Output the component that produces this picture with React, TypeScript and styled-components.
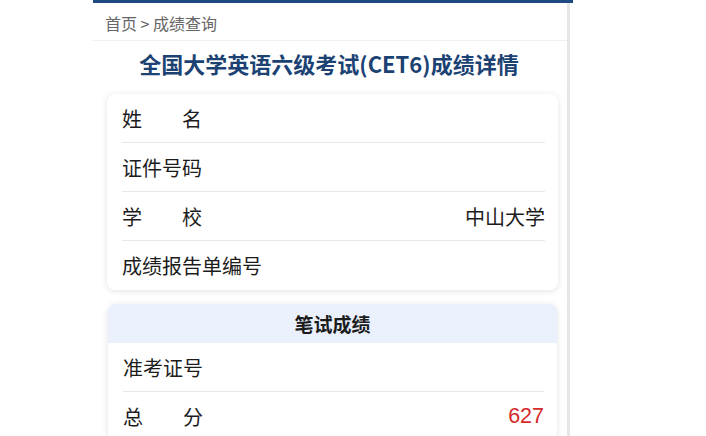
import styled, { createGlobalStyle } from "styled-components";

const GlobalStyle = createGlobalStyle`
  html, body {
    margin: 0;
    padding: 0;
    background: #fff;
  }
  body {
    font-family: "Noto Sans CJK SC", "Noto Sans", sans-serif;
    color: #1c1c1c;
  }
`;

const Screen = styled.div`
  width: 706px;
  height: 436px;
  overflow: hidden;
  background: #fff;
  padding-left: 93px;
  box-sizing: border-box;
`;

const Phone = styled.div`
  width: 480px;
  height: 436px;
  display: flex;
  flex-direction: column;
  border-top: 3px solid #1d4a80;
  box-sizing: border-box;
  position: relative;
  & > * {
    flex-shrink: 0;
  }
`;

// the thin grey scroll track on the right of the page
const ScrollTrack = styled.div`
  position: absolute;
  top: 0;
  bottom: 0;
  right: 3px;
  width: 3px;
  background: #e6e6e6;
`;

const Breadcrumb = styled.div`
  height: 38px;
  display: flex;
  align-items: center;
  padding: 2px 0 0 12px;
  font-size: 16px;
  color: #666;
  border-bottom: 1px solid #f0f0f0;
  margin-right: 3px;
  box-sizing: border-box;
`;

const Title = styled.h1`
  margin: 0;
  height: 44px;
  display: flex;
  align-items: center;
  justify-content: center;
  padding-right: 8px;
  font-size: 22px;
  font-weight: 700;
  color: #1b4273;
`;

const Content = styled.div`
  display: flex;
  flex-direction: column;
  gap: 14px;
  padding: 9px 15px 0 14px;
`;

const Card = styled.div<{ $inset?: number }>`
  margin: 0 ${(p) => p.$inset ?? 0}px;
  background: #fff;
  border-radius: 8px;
  box-shadow: 0 1px 6px rgba(0, 0, 0, 0.12);
  overflow: hidden;
  flex-shrink: 0;
`;

const CardHeader = styled.div`
  height: 39px;
  display: flex;
  align-items: center;
  justify-content: center;
  background: #eaf1fc;
  font-size: 19px;
  font-weight: 700;
  color: #1c1c1c;
`;

const Rows = styled.div`
  padding: 0 13px 0 15px;
`;

const Row = styled.div`
  height: 49px;
  display: flex;
  align-items: center;
  justify-content: space-between;
  font-size: 20px;
  color: #1c1c1c;
  border-bottom: 1px solid #e8e8e8;
  box-sizing: border-box;
  &:last-child {
    border-bottom: none;
  }
`;

const Label = styled.span`
  white-space: pre;
`;

const Value = styled.span<{ $red?: boolean }>`
  color: ${(p) => (p.$red ? "#d42a2a" : "#1c1c1c")};
  font-family: ${(p) => (p.$red ? '"Liberation Sans", Arial, sans-serif' : "inherit")};
  font-size: ${(p) => (p.$red ? "21.5px" : "inherit")};
`;

export default function App() {
  return (
    <Screen>
      <GlobalStyle />
      <Phone>
        <ScrollTrack />
        <Breadcrumb>首页 &gt; 成绩查询</Breadcrumb>
        <Title>全国大学英语六级考试(CET6)成绩详情</Title>
        <Content>
          <Card>
            <Rows>
              <Row><Label>姓　　名</Label><Value /></Row>
              <Row><Label>证件号码</Label><Value /></Row>
              <Row><Label>学　　校</Label><Value>中山大学</Value></Row>
              <Row><Label>成绩报告单编号</Label><Value /></Row>
            </Rows>
          </Card>
          <Card $inset={1}>
            <CardHeader>笔试成绩</CardHeader>
            <Rows>
              <Row><Label>准考证号</Label><Value /></Row>
              <Row><Label>总　　分</Label><Value $red>627</Value></Row>
            </Rows>
          </Card>
        </Content>
      </Phone>
    </Screen>
  );
}
